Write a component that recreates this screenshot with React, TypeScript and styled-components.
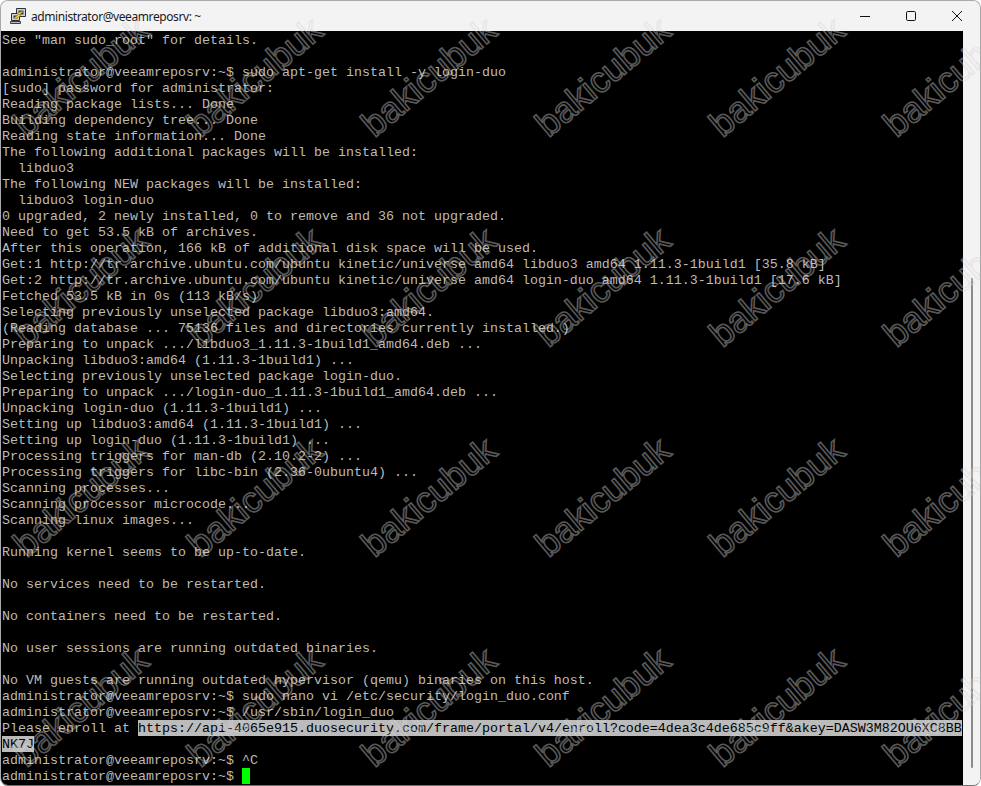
import React from "react";
import styled, { createGlobalStyle } from "styled-components";

const Global = createGlobalStyle`
  html, body { margin: 0; padding: 0; background: #fff; overflow: hidden; }
  #root { width: 981px; height: 786px; }
`;

const Window = styled.div`
  position: relative;
  width: 981px;
  height: 786px;
  box-sizing: border-box;
  display: flex;
  flex-direction: column;
  background: #f3f3f3;
  border: 1px solid #a9a9a9;
  border-bottom-color: #6f6f6f;
  border-radius: 8px;
  overflow: hidden;
`;

const TitleBar = styled.header`
  flex: 0 0 30px;
  display: flex;
  align-items: center;
  padding-left: 8px;
  background: #f3f3f3;
`;

const AppIcon = styled.svg`
  width: 18px;
  height: 18px;
  flex: none;
`;

const Title = styled.span`
  margin-left: 4px;
  flex: 1;
  font: 12px "Noto Sans", "Open Sans", sans-serif;
  letter-spacing: -0.41px;
  color: #1a1a1a;
`;

const WindowButton = styled.button`
  width: 46px;
  height: 30px;
  padding: 0;
  border: 0;
  background: transparent;
  display: flex;
  align-items: center;
  justify-content: center;
  svg { width: 10px; height: 10px; display: block; }
`;

const Controls = styled.div`
  display: flex;
`;

const Body = styled.div`
  flex: 1;
  display: flex;
  min-height: 0;
`;

const Terminal = styled.main`
  flex: 1;
  min-width: 0;
  box-sizing: border-box;
  padding: 1px 0 0 1px;
  background: #000;
  color: #bbb;
  font: 13.3333px/18px "Liberation Mono", "Courier New", monospace;
`;

const Line = styled.div`
  height: 16px;
  white-space: pre;
`;

const Selected = styled.span`
  display: inline-block;
  height: 16px;
  background: #bbb;
  color: #000;
  vertical-align: top;
`;

const Cursor = styled.span`
  display: inline-block;
  width: 8px;
  height: 16px;
  background: #00ff00;
  vertical-align: top;
`;

const ScrollTrack = styled.aside`
  flex: 0 0 17px;
  box-sizing: border-box;
  display: flex;
  justify-content: center;
  padding: 247px 0 16px 0;
  background: #f3f3f3;
`;

const ScrollThumb = styled.div`
  width: 2px;
  height: 490px;
  border-radius: 1px;
  background: #8b8b8b;
`;

const WatermarkLayer = styled.div`
  position: absolute;
  left: -7px;
  top: -29px;
  display: grid;
  grid-template-columns: repeat(6, 174px);
  grid-auto-rows: 210px;
  pointer-events: none;
`;

const Watermark = styled.span`
  display: flex;
  align-items: center;
  justify-content: center;
  font: 36px "Liberation Sans", Arial, sans-serif;
  color: transparent;
  -webkit-text-stroke: 1.6px rgba(215, 215, 215, 0.42);
  transform: rotate(-40deg);
  white-space: nowrap;
`;

const URL_TEXT =
  "https://api-4065e915.duosecurity.com/frame/portal/v4/enroll?code=4dea3c4de685c9ff&akey=DASW3M82OU6XC8BB";
const PROMPT = "administrator@veeamreposrv:~$ ";

const lines = [
  'See "man sudo_root" for details.',
  "",
  PROMPT + "sudo apt-get install -y login-duo",
  "[sudo] password for administrator:",
  "Reading package lists... Done",
  "Building dependency tree... Done",
  "Reading state information... Done",
  "The following additional packages will be installed:",
  "  libduo3",
  "The following NEW packages will be installed:",
  "  libduo3 login-duo",
  "0 upgraded, 2 newly installed, 0 to remove and 36 not upgraded.",
  "Need to get 53.5 kB of archives.",
  "After this operation, 166 kB of additional disk space will be used.",
  "Get:1 http://tr.archive.ubuntu.com/ubuntu kinetic/universe amd64 libduo3 amd64 1.11.3-1build1 [35.8 kB]",
  "Get:2 http://tr.archive.ubuntu.com/ubuntu kinetic/universe amd64 login-duo amd64 1.11.3-1build1 [17.6 kB]",
  "Fetched 53.5 kB in 0s (113 kB/s)",
  "Selecting previously unselected package libduo3:amd64.",
  "(Reading database ... 75136 files and directories currently installed.)",
  "Preparing to unpack .../libduo3_1.11.3-1build1_amd64.deb ...",
  "Unpacking libduo3:amd64 (1.11.3-1build1) ...",
  "Selecting previously unselected package login-duo.",
  "Preparing to unpack .../login-duo_1.11.3-1build1_amd64.deb ...",
  "Unpacking login-duo (1.11.3-1build1) ...",
  "Setting up libduo3:amd64 (1.11.3-1build1) ...",
  "Setting up login-duo (1.11.3-1build1) ...",
  "Processing triggers for man-db (2.10.2-2) ...",
  "Processing triggers for libc-bin (2.36-0ubuntu4) ...",
  "Scanning processes...",
  "Scanning processor microcode...",
  "Scanning linux images...",
  "",
  "Running kernel seems to be up-to-date.",
  "",
  "No services need to be restarted.",
  "",
  "No containers need to be restarted.",
  "",
  "No user sessions are running outdated binaries.",
  "",
  "No VM guests are running outdated hypervisor (qemu) binaries on this host.",
  PROMPT + "sudo nano vi /etc/security/login_duo.conf",
  PROMPT + "/usr/sbin/login_duo",
];

const PuttyIcon = () => (
  <AppIcon viewBox="0 0 18 18">
    <path d="M7.5 1.5h9v8h-9z" fill="#d4d4d4" stroke="#2e2e2e" strokeWidth="1" />
    <path d="M9.5 3.5h5v4h-5z" fill="#24407f" />
    <path d="M2.5 6.5h8v7h-8z" fill="#d4d4d4" stroke="#2e2e2e" strokeWidth="1" />
    <path d="M4.5 8.5h4v3h-4z" fill="#24407f" />
    <path d="M1.5 14.5h10v2h-10z" fill="#bdbdbd" stroke="#3c3c3c" strokeWidth="1" />
    <path d="M13 4L8 6.5l1.4 1L5 11l1 1.2 6-3.7-1.5-1L14 5z" fill="#f7d51d" stroke="#7d6800" strokeWidth="0.5" />
  </AppIcon>
);

export default function App() {
  return (
    <>
      <Global />
      <Window>
        <TitleBar>
          <PuttyIcon />
          <Title>administrator@veeamreposrv: ~</Title>
          <Controls>
            <WindowButton aria-label="Minimize">
              <svg viewBox="0 0 10 10"><path d="M0 5.5h10" stroke="#111" strokeWidth="1" fill="none" /></svg>
            </WindowButton>
            <WindowButton aria-label="Maximize">
              <svg viewBox="0 0 10 10"><rect x="0.5" y="0.5" width="9" height="9" rx="1.2" stroke="#111" strokeWidth="1" fill="none" /></svg>
            </WindowButton>
            <WindowButton aria-label="Close">
              <svg viewBox="0 0 10 10"><path d="M0 0l10 10M10 0L0 10" stroke="#111" strokeWidth="1" fill="none" /></svg>
            </WindowButton>
          </Controls>
        </TitleBar>
        <Body>
          <Terminal>
            {lines.map((text, i) => (
              <Line key={i}>{text}</Line>
            ))}
            <Line>
              Please enroll at <Selected>{URL_TEXT}</Selected>
            </Line>
            <Line>
              <Selected>NK7J</Selected>
            </Line>
            <Line>{PROMPT}^C</Line>
            <Line>
              {PROMPT}
              <Cursor />
            </Line>
          </Terminal>
          <ScrollTrack>
            <ScrollThumb />
          </ScrollTrack>
        </Body>
        <WatermarkLayer>
          {Array.from({ length: 24 }, (_, i) => (
            <Watermark key={i}>bakicubuk</Watermark>
          ))}
        </WatermarkLayer>
      </Window>
    </>
  );
}
